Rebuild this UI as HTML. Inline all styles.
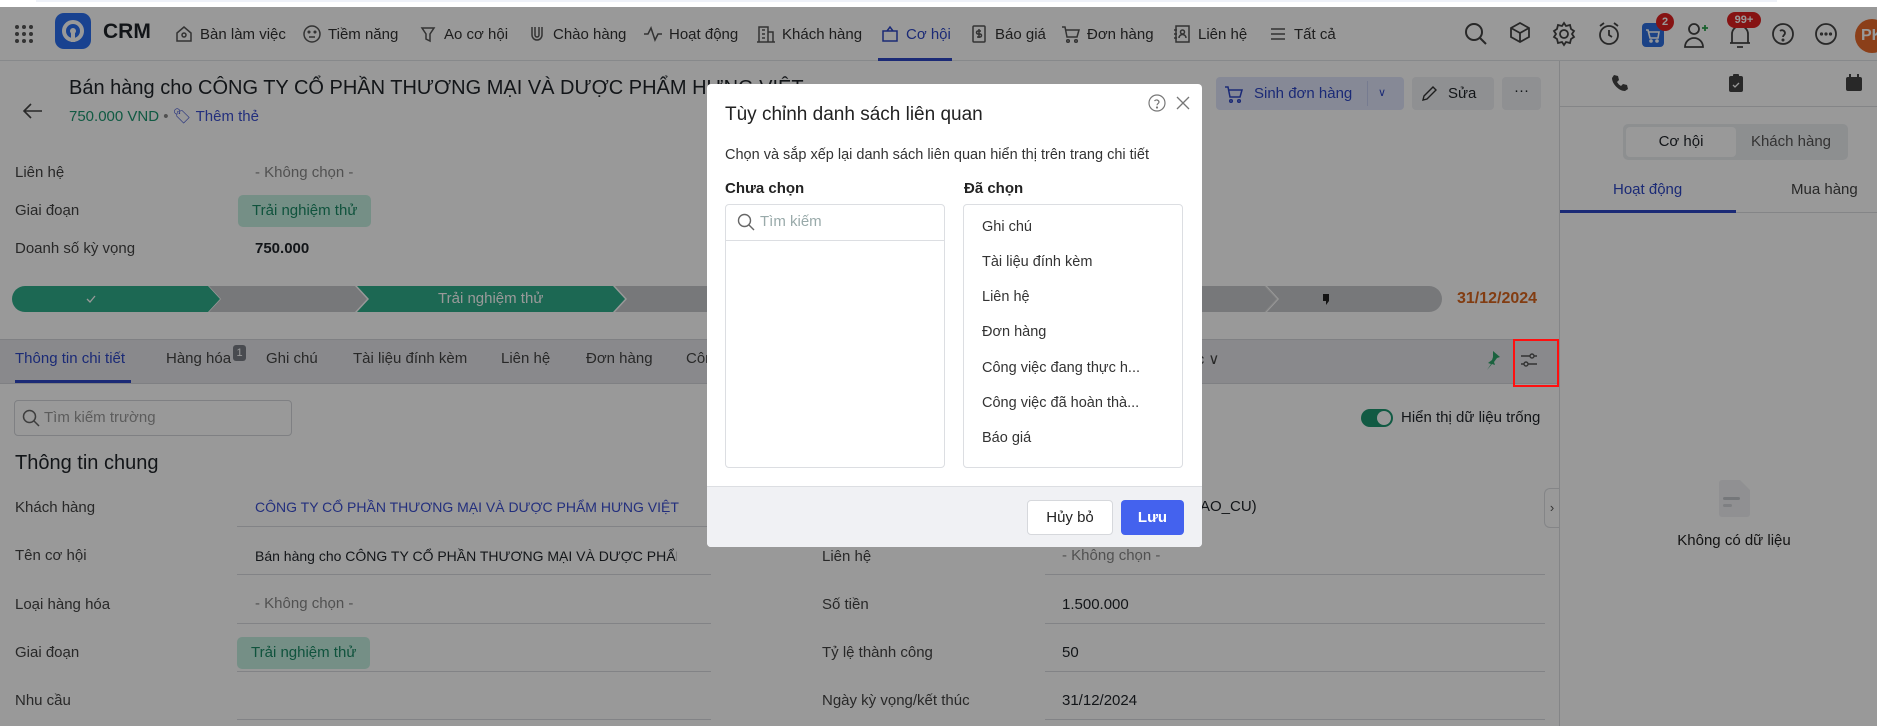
<!DOCTYPE html>
<html><head><meta charset="utf-8"><style>
*{box-sizing:border-box;margin:0;padding:0}
body{width:1877px;height:726px;overflow:hidden;position:relative;background:#fff;font-family:"Liberation Sans","DejaVu Sans",sans-serif;color:#1f2329;font-size:15px}
.a{position:absolute;white-space:nowrap}
.nav{position:absolute;left:0;top:7px;width:1877px;height:54px;background:#fff;border-bottom:1px solid #e2e4e8}
.ni{position:absolute;top:0;height:54px;display:flex;align-items:center;gap:6px;font-size:15px;color:#333}
.ni svg{width:20px;height:20px;fill:none;stroke:#555;stroke-width:1.5}
.lbl{color:#444}
.ul{position:absolute;height:1px;background:#d9dbe0}
.tab{position:absolute;top:350px;font-size:15px;color:#444}
.badge{position:absolute;background:#c3efdf;color:#1b8a66;border-radius:5px;padding:0 14px;height:32px;line-height:32px;font-size:15px}
.ov{position:absolute;left:0;top:7px;width:1877px;height:719px;background:rgba(0,0,0,.4)}
</style></head><body>
<div class="a" style="left:0;top:0;width:1877px;height:7px;background:#fff;z-index:5"><div style="position:absolute;left:36px;right:100px;top:0;height:2px;background:#eef1f8"></div></div>
<div class="nav">
 <svg class="a" style="left:14px;top:17px" width="20" height="20"><g fill="#555"><circle cx="3" cy="3" r="2"/><circle cx="10" cy="3" r="2"/><circle cx="17" cy="3" r="2"/><circle cx="3" cy="10" r="2"/><circle cx="10" cy="10" r="2"/><circle cx="17" cy="10" r="2"/><circle cx="3" cy="17" r="2"/><circle cx="10" cy="17" r="2"/><circle cx="17" cy="17" r="2"/></g></svg>
 <div class="a" style="left:55px;top:6px;width:36px;height:36px;border-radius:9px;background:#2b6ff0"><svg width="36" height="36"><circle cx="18" cy="18" r="9" fill="none" stroke="#fff" stroke-width="4"/><circle cx="18" cy="18" r="3" fill="#fff"/><rect x="16" y="20" width="4" height="9" fill="#fff"/></svg></div>
 <div class="a" style="left:103px;top:13px;font-size:21px;font-weight:bold;color:#1f2329">CRM</div>
 <div class="ni" style="left:174px"><svg viewBox="0 0 20 20"><path d="M3 9l7-6 7 6v8H3z"/><circle cx="10" cy="11" r="2"/></svg>Bàn làm việc</div>
 <div class="ni" style="left:302px"><svg viewBox="0 0 20 20"><circle cx="10" cy="10" r="8"/><circle cx="7" cy="8" r=".8"/><circle cx="13" cy="8" r=".8"/><path d="M7 13h6"/></svg>Tiềm năng</div>
 <div class="ni" style="left:418px"><svg viewBox="0 0 20 20"><path d="M4 4h12l-4 6v7l-4-2v-5z"/></svg>Ao cơ hội</div>
 <div class="ni" style="left:527px"><svg viewBox="0 0 20 20"><path d="M5 3v8a5 5 0 0010 0V3M8 3v8a2 2 0 004 0V3"/></svg>Chào hàng</div>
 <div class="ni" style="left:643px"><svg viewBox="0 0 20 20"><path d="M1 10h4l3-6 4 12 3-6h4"/></svg>Hoạt động</div>
 <div class="ni" style="left:756px"><svg viewBox="0 0 20 20"><path d="M3 18V3h9v15M12 8h5v10M1 18h18M6 6h3M6 10h3M6 14h3"/></svg>Khách hàng</div>
 <div class="ni" style="left:880px;color:#2d46c5"><svg viewBox="0 0 20 20" style="stroke:#2d46c5"><path d="M3 7h14v10H3zM7 7l3-4 3 4"/></svg>Cơ hội</div>
 <div class="a" style="left:878px;top:51px;width:74px;height:3px;background:#2d46c5"></div>
 <div class="ni" style="left:969px"><svg viewBox="0 0 20 20"><rect x="4" y="2" width="12" height="16" rx="1"/><path d="M10 5v9M12 7H9a1.5 1.5 0 000 3h2a1.5 1.5 0 010 3H8"/></svg>Báo giá</div>
 <div class="ni" style="left:1061px"><svg viewBox="0 0 20 20"><path d="M1 3h3l2 10h10l2-7H5"/><circle cx="7" cy="17" r="1.3"/><circle cx="15" cy="17" r="1.3"/></svg>Đơn hàng</div>
 <div class="ni" style="left:1172px"><svg viewBox="0 0 20 20"><rect x="4" y="2" width="13" height="16"/><circle cx="10.5" cy="8" r="2"/><path d="M7 14a3.5 3.5 0 017 0M2 6h3M2 10h3M2 14h3"/></svg>Liên hệ</div>
 <div class="ni" style="left:1268px"><svg viewBox="0 0 20 20"><path d="M3 5h14M3 10h14M3 15h14"/></svg>Tất cả</div>
 <svg class="a" style="left:1463px;top:14px" width="26" height="26" fill="none" stroke="#444" stroke-width="2"><circle cx="11" cy="11" r="8"/><path d="M17 17l6 6"/></svg>
 <svg class="a" style="left:1508px;top:14px" width="26" height="26" fill="none" stroke="#444" stroke-width="1.8"><path d="M12 2l9 5v9l-9 5-9-5V7zM3 7l9 5 9-5M12 12v9"/></svg>
 <svg class="a" style="left:1551px;top:14px" width="26" height="26" fill="none" stroke="#444" stroke-width="1.8"><circle cx="13" cy="13" r="4"/><path d="M13 2l2 3 4-1 1 4 3 2-2 3 2 3-3 2-1 4-4-1-2 3-2-3-4 1-1-4-3-2 2-3-2-3 3-2 1-4 4 1z"/></svg>
 <svg class="a" style="left:1596px;top:14px" width="26" height="26" fill="none" stroke="#444" stroke-width="1.8"><circle cx="13" cy="14" r="9"/><path d="M13 9v5l3 2M4 5l4-3M22 5l-4-3"/></svg>
 <div class="a" style="left:1642px;top:16px;width:22px;height:24px;border-radius:4px;background:#2e6fe0"><svg width="22" height="24" fill="none" stroke="#fff" stroke-width="1.6"><path d="M4 7h2l2 8h8l1-6H7"/><circle cx="9" cy="18" r="1"/><circle cx="15" cy="18" r="1"/></svg></div>
 <div class="a" style="left:1656px;top:6px;width:18px;height:18px;border-radius:9px;background:#e02020;color:#fff;font-size:11px;font-weight:bold;text-align:center;line-height:18px">2</div>
 <svg class="a" style="left:1683px;top:14px" width="28" height="28" fill="none" stroke="#444" stroke-width="1.8"><circle cx="11" cy="8" r="5"/><path d="M2 26a9 9 0 0118 0z"/><path d="M22 4v6M19 7h6" stroke="#2ea44f"/></svg>
 <svg class="a" style="left:1727px;top:16px" width="26" height="28" fill="none" stroke="#444" stroke-width="1.8"><path d="M5 20V11a8 8 0 0116 0v9H3h20M10 24h6"/></svg>
 <div class="a" style="left:1727px;top:5px;width:34px;height:16px;border-radius:8px;background:#e02020;color:#fff;font-size:11px;font-weight:bold;text-align:center;line-height:16px">99+</div>
 <svg class="a" style="left:1771px;top:15px" width="24" height="24" fill="none" stroke="#444" stroke-width="1.8"><circle cx="12" cy="12" r="10"/><path d="M9 9a3 3 0 015 2c0 2-2 2-2 4"/><circle cx="12" cy="18" r=".6"/></svg>
 <svg class="a" style="left:1814px;top:15px" width="24" height="24" fill="none" stroke="#444" stroke-width="1.8"><circle cx="12" cy="12" r="10"/><circle cx="7.5" cy="12" r=".7"/><circle cx="12" cy="12" r=".7"/><circle cx="16.5" cy="12" r=".7"/></svg>
 <div class="a" style="left:1855px;top:12px;width:34px;height:34px;border-radius:17px;background:#e86a2a;color:#fff;font-weight:bold;font-size:16px;line-height:34px;padding-left:6px">PK</div>
</div>

<svg class="a" style="left:22px;top:102px" width="22" height="18" fill="none" stroke="#444" stroke-width="1.6"><path d="M20 9H3M9 2L2 9l7 7"/></svg>
<div class="a" style="left:69px;top:77px;font-size:20px;color:#1f2329">Bán hàng cho CÔNG TY CỔ PHẦN THƯƠNG MẠI VÀ DƯỢC PHẨM HƯNG VIỆT</div>
<div class="a" style="left:69px;top:107px;font-size:15px;color:#1d9670">750.000 VND <span style="color:#888">•</span> <span style="color:#3b4fd0">🏷︎ Thêm thẻ</span></div>
<div class="a" style="left:1216px;top:77px;width:188px;height:33px;background:#dfe5fb;border-radius:4px;color:#2d46c5;font-size:15px;line-height:33px;padding-left:38px">Sinh đơn hàng<span style="position:absolute;left:151px;top:4px;height:25px;border-left:1px solid #c5cef0"></span><span style="position:absolute;left:162px;top:0;font-size:11px">∨</span></div>
<svg class="a" style="left:1224px;top:84px" width="20" height="20" fill="none" stroke="#2d46c5" stroke-width="1.5"><path d="M1 3h3l2 10h10l2-7H5"/><circle cx="7" cy="17" r="1.3"/><circle cx="15" cy="17" r="1.3"/></svg>
<div class="a" style="left:1412px;top:77px;width:82px;height:33px;background:#eef0f3;border-radius:4px;line-height:33px;padding-left:36px;font-size:15px">Sửa</div>
<svg class="a" style="left:1420px;top:85px" width="18" height="18" fill="none" stroke="#333" stroke-width="1.4"><path d="M3 15l1-4 9-9 3 3-9 9z"/></svg>
<div class="a" style="left:1502px;top:77px;width:39px;height:33px;background:#eef0f3;border-radius:4px;line-height:28px;text-align:center;font-size:15px">···</div>

<div class="a lbl" style="left:15px;top:164px">Liên hệ</div><div class="a" style="left:255px;top:164px;color:#888">- Không chọn -</div>
<div class="a lbl" style="left:15px;top:202px">Giai đoạn</div><div class="badge" style="left:238px;top:195px">Trải nghiệm thử</div>
<div class="a lbl" style="left:15px;top:240px">Doanh số kỳ vọng</div><div class="a" style="left:255px;top:240px;font-weight:bold">750.000</div>

<svg class="a" style="left:12px;top:286px" width="1430" height="26">
 <path d="M13 0H196l12 13-12 13H13A13 13 0 010 13 13 13 0 0113 0z" fill="#2fae8b"/>
 <path d="M197 0h146l12 13-12 13H197l12-13z" fill="#c6c8cc"/>
 <path d="M345 0h256l12 13-12 13H345l12-13z" fill="#2fae8b"/>
 <path d="M603 0h650l12 13-12 13H603l12-13z" fill="#c6c8cc"/>
 <path d="M1255 0h162a13 13 0 010 26H1255l12-13z" fill="#c6c8cc"/>
 <path d="M1253 0l12 13-12 13" stroke="#ddd" fill="none"/>
 <path d="M75 13l3 3 5-6" stroke="#fff" fill="none" stroke-width="1.3"/>
 <path d="M1311 8h6v7l-3 4v-4h-3z" fill="#222"/>
</svg>
<div class="a" style="left:438px;top:290px;color:#fff;font-size:15px">Trải nghiệm thử</div>
<div class="a" style="left:1457px;top:290px;color:#d9651d;font-weight:bold;font-size:16px">31/12/2024</div>

<div class="a" style="left:0;top:339px;width:1559px;height:45px;background:#e4e5e9;border-top:1px solid #d4d6da;border-bottom:1px solid #d4d6da"></div>
<div class="tab" style="left:15px;color:#2d46c5">Thông tin chi tiết</div>
<div class="a" style="left:15px;top:380px;width:116px;height:3px;background:#2d46c5"></div>
<div class="tab" style="left:166px">Hàng hóa</div><div class="a" style="left:233px;top:345px;width:13px;height:16px;background:#7a7d85;color:#fff;font-size:11px;text-align:center;line-height:16px;border-radius:3px">1</div>
<div class="tab" style="left:266px">Ghi chú</div>
<div class="tab" style="left:353px">Tài liệu đính kèm</div>
<div class="tab" style="left:501px">Liên hệ</div>
<div class="tab" style="left:586px">Đơn hàng</div>
<div class="tab" style="left:686px">Công việc</div>
<div class="tab" style="left:1170px">Khác ∨</div>
<svg class="a" style="left:1484px;top:350px" width="18" height="20" fill="#2ea46a"><path d="M9 1l7 6-3 1-3 4 1 3-3-1-5 6 4-6-3-1 4-3 1-3z"/></svg>
<svg class="a" style="left:1519px;top:350px" width="20" height="20" fill="none" stroke="#555" stroke-width="1.4"><path d="M2 6h9M15 6h3M2 14h3M9 14h9"/><circle cx="13" cy="6" r="2"/><circle cx="7" cy="14" r="2"/></svg>

<div class="a" style="left:14px;top:400px;width:278px;height:36px;border:1px solid #d4d6db;border-radius:4px"></div>
<svg class="a" style="left:22px;top:409px" width="18" height="18" fill="none" stroke="#666" stroke-width="1.5"><circle cx="7.5" cy="7.5" r="6"/><path d="M12 12l5 5"/></svg>
<div class="a" style="left:44px;top:409px;color:#999">Tìm kiếm trường</div>
<div class="a" style="left:1361px;top:409px;width:32px;height:18px;border-radius:9px;background:#1d9670"><div style="position:absolute;right:2px;top:2px;width:14px;height:14px;border-radius:7px;background:#fff"></div></div>
<div class="a" style="left:1401px;top:409px">Hiển thị dữ liệu trống</div>

<div class="a" style="left:15px;top:452px;font-size:20px;color:#1f2329">Thông tin chung</div>
<div class="a lbl" style="left:15px;top:499px">Khách hàng</div><div class="a" style="left:255px;top:499px;color:#3b4fd0;font-size:14px">CÔNG TY CỔ PHẦN THƯƠNG MẠI VÀ DƯỢC PHẨM HƯNG VIỆT</div><div class="ul" style="left:237px;top:526px;width:474px"></div>
<div class="a lbl" style="left:15px;top:547px">Tên cơ hội</div><div class="a" style="left:255px;top:548px;width:422px;overflow:hidden;font-size:14px">Bán hàng cho CÔNG TY CỔ PHẦN THƯƠNG MẠI VÀ DƯỢC PHẨM</div><div class="ul" style="left:237px;top:574px;width:474px"></div>
<div class="a lbl" style="left:15px;top:596px">Loại hàng hóa</div><div class="a" style="left:255px;top:595px;color:#888">- Không chọn -</div><div class="ul" style="left:237px;top:623px;width:474px"></div>
<div class="a lbl" style="left:15px;top:644px">Giai đoạn</div><div class="badge" style="left:237px;top:637px">Trải nghiệm thử</div><div class="ul" style="left:237px;top:671px;width:474px"></div>
<div class="a lbl" style="left:15px;top:692px">Nhu cầu</div><div class="ul" style="left:237px;top:719px;width:474px"></div>
<div class="a" style="left:1200px;top:498px">AO_CU)</div>
<div class="a lbl" style="left:822px;top:548px">Liên hệ</div><div class="a" style="left:1062px;top:547px;color:#888">- Không chọn -</div><div class="ul" style="left:1045px;top:574px;width:500px"></div>
<div class="a lbl" style="left:822px;top:596px">Số tiền</div><div class="a" style="left:1062px;top:596px">1.500.000</div><div class="ul" style="left:1045px;top:623px;width:500px"></div>
<div class="a lbl" style="left:822px;top:644px">Tỷ lệ thành công</div><div class="a" style="left:1062px;top:644px">50</div><div class="ul" style="left:1045px;top:671px;width:500px"></div>
<div class="a lbl" style="left:822px;top:692px">Ngày kỳ vọng/kết thúc</div><div class="a" style="left:1062px;top:692px">31/12/2024</div><div class="ul" style="left:1045px;top:719px;width:500px"></div>

<div class="a" style="left:1559px;top:61px;width:1px;height:665px;background:#dcdee2"></div>
<div class="a" style="left:1544px;top:488px;width:15px;height:40px;border:1px solid #dcdee2;border-right:none;border-radius:6px 0 0 6px;background:#fff;color:#555;font-size:13px;line-height:38px;text-align:center">›</div>
<div class="a" style="left:1560px;top:106px;width:317px;height:1px;background:#dcdee2"></div>
<svg class="a" style="left:1611px;top:74px" width="18" height="18" fill="#444"><path d="M3 1l4 1 1 4-2 2a10 10 0 004 4l2-2 4 1 1 4-3 2C8 17 1 10 1 4z"/></svg>
<svg class="a" style="left:1728px;top:73px" width="16" height="20" fill="#444"><rect x="1" y="3" width="14" height="16" rx="2"/><rect x="5" y="1" width="6" height="4" rx="1"/><path d="M5 12l2 2 4-4" stroke="#fff" fill="none" stroke-width="1.3"/></svg>
<svg class="a" style="left:1845px;top:73px" width="18" height="19" fill="#444"><rect x="1" y="4" width="16" height="14" rx="2"/><rect x="4" y="1" width="2" height="5"/><rect x="12" y="1" width="2" height="5"/></svg>
<div class="a" style="left:1623px;top:124px;width:225px;height:36px;background:#eceef1;border-radius:5px"></div>
<div class="a" style="left:1626px;top:127px;width:110px;height:30px;background:#fff;border-radius:4px;text-align:center;line-height:30px">Cơ hội</div>
<div class="a" style="left:1736px;top:127px;width:110px;height:30px;text-align:center;line-height:30px;color:#555">Khách hàng</div>
<div class="a" style="left:1613px;top:181px;font-size:15px;color:#2d46c5">Hoạt động</div>
<div class="a" style="left:1791px;top:181px;font-size:15px;color:#444">Mua hàng</div>
<div class="a" style="left:1560px;top:212px;width:317px;height:1px;background:#dcdee2"></div>
<div class="a" style="left:1560px;top:210px;width:176px;height:3px;background:#2d46c5"></div>
<svg class="a" style="left:1719px;top:480px" width="31" height="37"><path d="M3 0h18l10 10v24a3 3 0 01-3 3H3a3 3 0 01-3-3V3a3 3 0 013-3z" fill="#f0f1f4"/><rect x="4" y="17" width="17" height="3" rx="1.5" fill="#c4c6cc"/><rect x="4" y="24" width="9" height="3" rx="1.5" fill="#d2d4d9"/></svg>
<div class="a" style="left:1734px;top:532px;transform:translateX(-50%);font-size:15px;color:#222">Không có dữ liệu</div>

<div class="ov"></div>
<div class="a" style="left:1513px;top:339px;width:46px;height:48px;border:2px solid #ff1010;z-index:4"></div>

<div class="a" style="left:707px;top:84px;width:495px;height:463px;background:#fff;border-radius:4px;overflow:hidden;z-index:6">
 <div class="a" style="left:18px;top:20px;font-size:19px;color:#222">Tùy chỉnh danh sách liên quan</div>
 <svg class="a" style="left:441px;top:10px" width="18" height="18" fill="none" stroke="#777" stroke-width="1.2"><circle cx="9" cy="9" r="8"/><path d="M6.5 7a2.5 2.5 0 014.5 1c0 1.5-2 1.7-2 3.3"/><circle cx="9" cy="13.5" r=".5"/></svg>
 <svg class="a" style="left:469px;top:12px" width="14" height="14" stroke="#777" stroke-width="1.3"><path d="M1 1l12 12M13 1L1 13"/></svg>
 <div class="a" style="left:18px;top:63px;font-size:14.5px;color:#333">Chọn và sắp xếp lại danh sách liên quan hiển thị trên trang chi tiết</div>
 <div class="a" style="left:18px;top:96px;font-size:15px;font-weight:bold;color:#222">Chưa chọn</div>
 <div class="a" style="left:257px;top:96px;font-size:15px;font-weight:bold;color:#222">Đã chọn</div>
 <div class="a" style="left:18px;top:120px;width:220px;height:264px;border:1px solid #dcdee2;border-radius:4px">
  <div style="position:absolute;left:0;right:0;top:35px;height:1px;background:#dcdee2"></div>
  <svg class="a" style="left:11px;top:8px" width="18" height="18" fill="none" stroke="#666" stroke-width="1.4"><circle cx="7.5" cy="7.5" r="6"/><path d="M12 12l5 5"/></svg>
  <div class="a" style="left:34px;top:8px;color:#9aa;font-size:15px">Tìm kiếm</div>
 </div>
 <div class="a" style="left:256px;top:120px;width:220px;height:264px;border:1px solid #dcdee2;border-radius:4px;font-size:14.5px;color:#333">
  <div class="a" style="left:18px;top:14px">Ghi chú</div>
  <div class="a" style="left:18px;top:49px">Tài liệu đính kèm</div>
  <div class="a" style="left:18px;top:84px">Liên hệ</div>
  <div class="a" style="left:18px;top:119px">Đơn hàng</div>
  <div class="a" style="left:18px;top:155px">Công việc đang thực h...</div>
  <div class="a" style="left:18px;top:190px">Công việc đã hoàn thà...</div>
  <div class="a" style="left:18px;top:225px">Báo giá</div>
 </div>
 <div class="a" style="left:0;top:402px;width:495px;height:61px;background:#f0f1f4;border-top:1px solid #dcdee2"></div>
 <div class="a" style="left:320px;top:416px;width:86px;height:35px;background:#fff;border:1px solid #d6d8dc;border-radius:4px;text-align:center;line-height:33px;font-size:15px;color:#222">Hủy bỏ</div>
 <div class="a" style="left:414px;top:416px;width:63px;height:35px;background:#4462ee;border-radius:4px;text-align:center;line-height:35px;font-size:15px;font-weight:bold;color:#fff">Lưu</div>
</div>
</body></html>
